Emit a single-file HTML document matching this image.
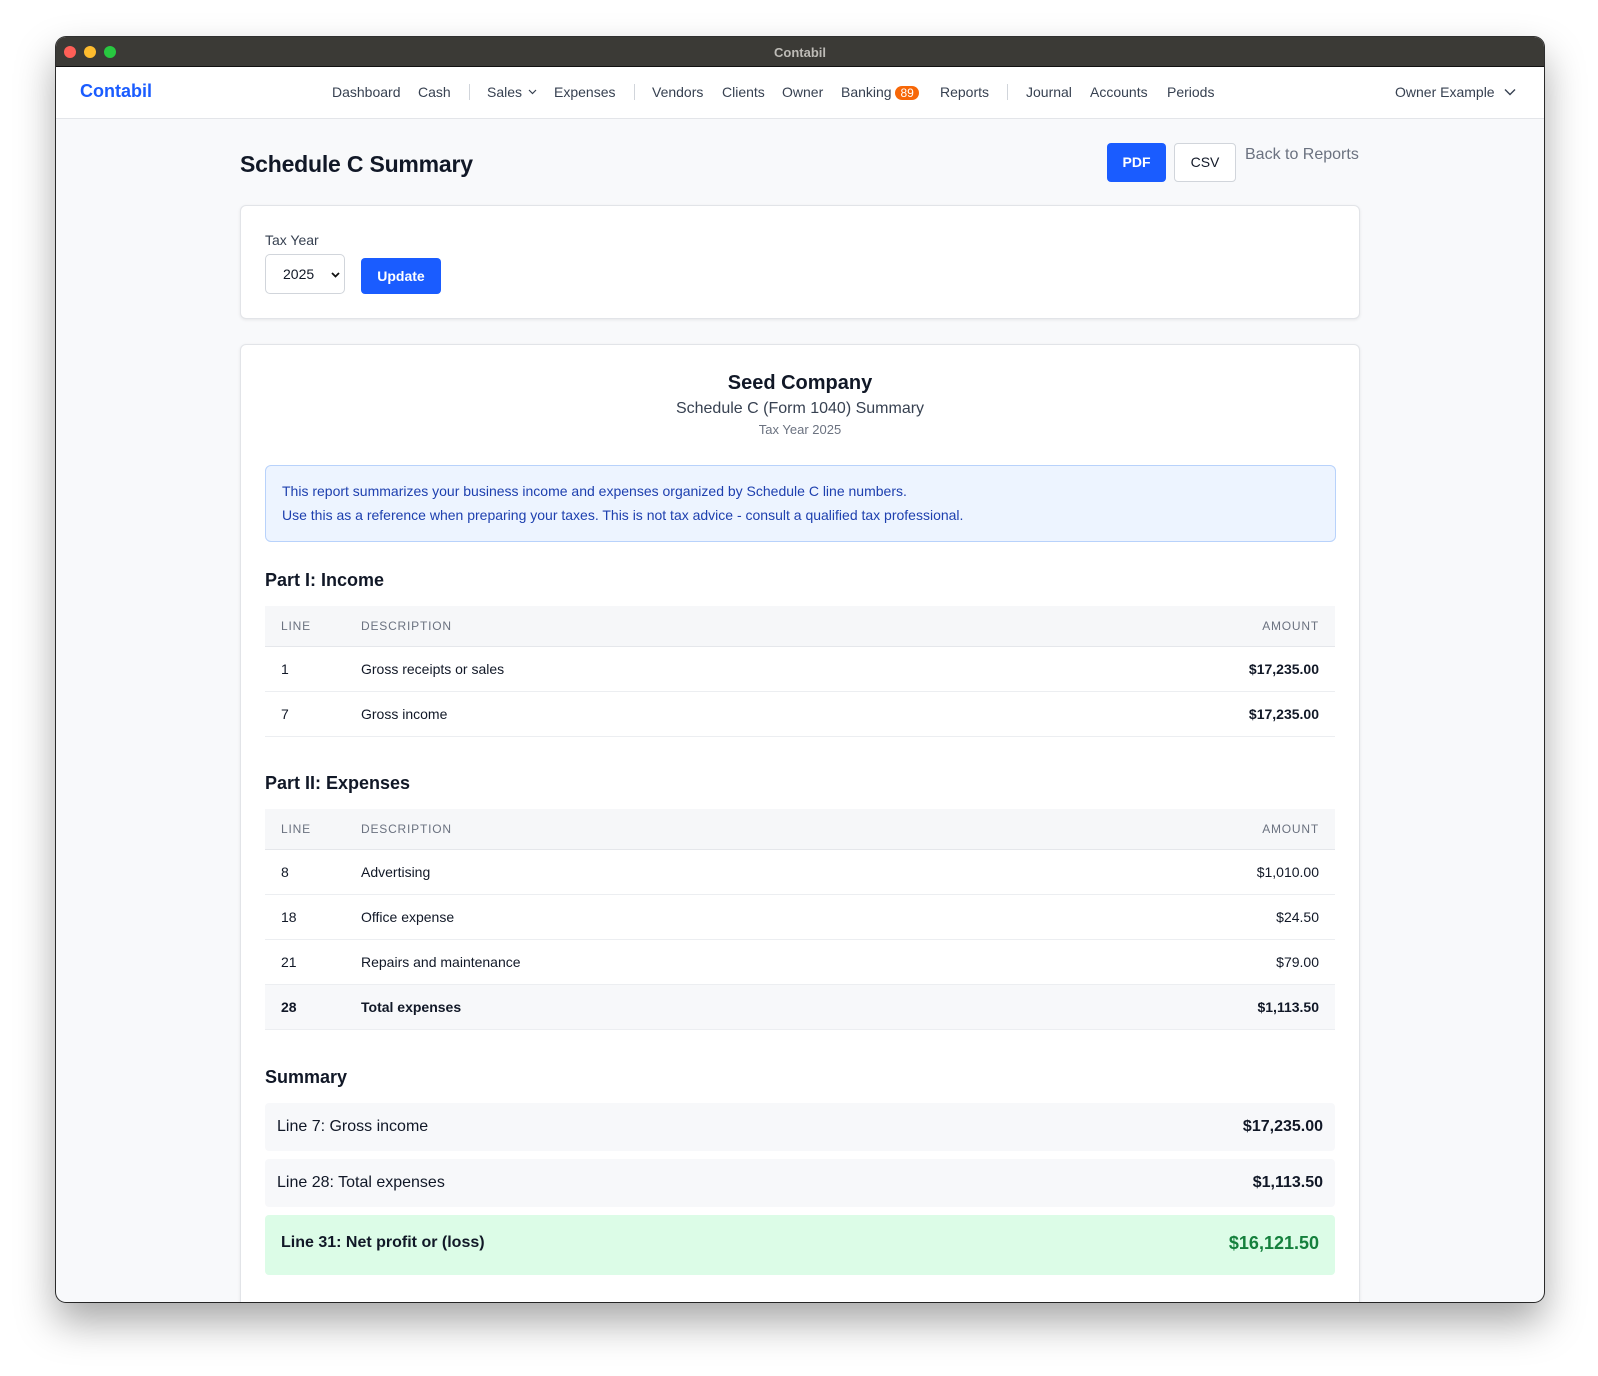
<!DOCTYPE html>
<html><head><meta charset="utf-8"><style>
*{box-sizing:border-box;margin:0;padding:0}
body{width:1598px;height:1376px;background:#fff;font-family:"Liberation Sans",sans-serif;position:relative;overflow:hidden;color:#111827}
.win{position:absolute;left:56px;top:37px;width:1488px;height:1265px;border-radius:10px;overflow:hidden;background:#f8f9fb;box-shadow:0 20px 40px rgba(0,0,0,.35),0 0 0 1px #333}
.tb{height:30px;background:#3b3a36;position:relative;border-bottom:1px solid #111}
.tb .t{position:absolute;width:100%;text-align:center;top:8px;color:#bdbbb6;font-size:13px;font-weight:bold}
.d{position:absolute;top:9px;width:12px;height:12px;border-radius:50%}
.nav{height:52px;background:#fff;border-bottom:1px solid #e3e5e9;position:relative;font-size:14px;color:#374151}
.nav span{position:absolute;top:17px}
.sep{position:absolute;top:17px;width:1px;height:16px;background:#d1d5db}
.a{position:absolute}
.card{position:absolute;background:#fff;border:1px solid #e2e4e8;border-radius:6px;box-shadow:0 1px 3px rgba(0,0,0,.08)}
table{border-collapse:collapse;width:1070px;font-size:14px}
th{background:#f6f7f9;color:#6b7280;font-size:12px;letter-spacing:.8px;font-weight:normal;text-align:left;height:40px;border-bottom:1px solid #e5e7eb;padding:0 16px}
td{height:45px;border-bottom:1px solid #eceef1;padding:0 16px}
.r{text-align:right}
h3{position:absolute;font-size:18px;font-weight:bold;left:24px}
.sb{position:absolute;left:24px;width:1070px;background:#f7f8fa;border-radius:4px;font-size:16px}
.sb span{position:absolute;top:15px}
</style></head><body>
<div class="win">
<div class="tb"><div class="d" style="left:8px;background:#fe5f57"></div><div class="d" style="left:28px;background:#febc2e"></div><div class="d" style="left:48px;background:#28c840"></div><div class="t">Contabil</div></div>
<div class="nav">
<span style="left:24px;top:14px;color:#1a5cff;font-size:18px;font-weight:bold">Contabil</span>
<span style="left:276px">Dashboard</span><span style="left:362px">Cash</span><div class="sep" style="left:413px"></div>
<span style="left:431px">Sales</span><svg class="a" style="left:472px;top:22px" width="9" height="6" viewBox="0 0 9 6"><path d="M1 1l3.5 3.5L8 1" fill="none" stroke="#374151" stroke-width="1.2"/></svg>
<span style="left:498px">Expenses</span><div class="sep" style="left:578px"></div>
<span style="left:596px">Vendors</span><span style="left:666px">Clients</span><span style="left:726px">Owner</span>
<span style="left:785px">Banking <b style="background:#f76707;color:#fff;border-radius:9px;padding:0 5px;font-size:12px;font-weight:normal">89</b></span>
<span style="left:884px">Reports</span><div class="sep" style="left:951px"></div>
<span style="left:970px">Journal</span><span style="left:1034px">Accounts</span><span style="left:1111px">Periods</span>
<span style="left:1339px">Owner Example</span><svg class="a" style="left:1448px;top:21px" width="12" height="8" viewBox="0 0 12 8"><path d="M1 1.5l5 5 5-5" fill="none" stroke="#374151" stroke-width="1.4"/></svg>
</div>
<div class="a" style="left:184px;top:114px;font-size:23px;font-weight:bold;letter-spacing:-.2px">Schedule C Summary</div>
<div class="a" style="left:1051px;top:106px;width:59px;height:39px;background:#1a5cff;border-radius:4px;color:#fff;font-size:14px;font-weight:bold;text-align:center;line-height:39px">PDF</div>
<div class="a" style="left:1118px;top:106px;width:62px;height:39px;background:#fff;border:1px solid #d1d5db;border-radius:4px;font-size:14px;text-align:center;line-height:37px">CSV</div>
<div class="a" style="left:1189px;top:109px;font-size:16px;color:#6b7280">Back to Reports</div>
<div class="card" style="left:184px;top:168px;width:1120px;height:114px">
<div class="a" style="left:24px;top:26px;font-size:14px;color:#374151">Tax Year</div>
<div class="a" style="left:24px;top:48px;width:80px;height:40px;border:1px solid #d1d5db;border-radius:5px;font-size:14px;line-height:38px;padding-left:17px">2025</div>
<svg class="a" style="left:90px;top:66px" width="9" height="6" viewBox="0 0 9 6"><path d="M1 1l3.5 3.5L8 1" fill="none" stroke="#111" stroke-width="1.8"/></svg>
<div class="a" style="left:120px;top:52px;width:80px;height:36px;background:#1a5cff;border-radius:4px;color:#fff;font-size:14px;font-weight:bold;text-align:center;line-height:36px">Update</div>
</div>
<div class="card" style="left:184px;top:307px;width:1120px;height:1000px">
<div class="a" style="left:0;width:100%;text-align:center;top:27px;font-size:20px;font-weight:bold">Seed Company</div>
<div class="a" style="left:0;width:100%;text-align:center;top:55px;font-size:16px;color:#374151">Schedule C (Form 1040) Summary</div>
<div class="a" style="left:0;width:100%;text-align:center;top:77px;font-size:13px;color:#6b7280">Tax Year 2025</div>
<div class="a" style="left:24px;top:120px;width:1071px;height:77px;background:#edf4ff;border:1px solid #b8d2fb;border-radius:6px;color:#1e40af;font-size:14px;padding:13px 16px;line-height:24px">This report summarizes your business income and expenses organized by Schedule C line numbers.<br>Use this as a reference when preparing your taxes. This is not tax advice - consult a qualified tax professional.</div>
<h3 style="top:225px">Part I: Income</h3>
<table class="a" style="left:24px;top:261px"><tr><th style="width:80px">LINE</th><th>DESCRIPTION</th><th class="r">AMOUNT</th></tr>
<tr><td>1</td><td>Gross receipts or sales</td><td class="r"><b>$17,235.00</b></td></tr>
<tr><td>7</td><td>Gross income</td><td class="r"><b>$17,235.00</b></td></tr></table>
<h3 style="top:428px">Part II: Expenses</h3>
<table class="a" style="left:24px;top:464px"><tr><th style="width:80px">LINE</th><th>DESCRIPTION</th><th class="r">AMOUNT</th></tr>
<tr><td>8</td><td>Advertising</td><td class="r">$1,010.00</td></tr>
<tr><td>18</td><td>Office expense</td><td class="r">$24.50</td></tr>
<tr><td>21</td><td>Repairs and maintenance</td><td class="r">$79.00</td></tr>
<tr style="background:#f7f8fa"><td><b>28</b></td><td><b>Total expenses</b></td><td class="r"><b>$1,113.50</b></td></tr></table>
<h3 style="top:722px">Summary</h3>
<div class="sb" style="top:758px;height:48px"><span style="left:12px">Line 7: Gross income</span><span style="right:12px;font-weight:bold">$17,235.00</span></div>
<div class="sb" style="top:814px;height:48px"><span style="left:12px">Line 28: Total expenses</span><span style="right:12px;font-weight:bold">$1,113.50</span></div>
<div class="sb" style="top:870px;height:60px;background:#dcfce7"><span style="left:16px;top:19px;font-weight:bold">Line 31: Net profit or (loss)</span><span style="right:16px;top:18px;font-weight:bold;color:#15803d;font-size:18px">$16,121.50</span></div>
</div>
</div>
</body></html>
